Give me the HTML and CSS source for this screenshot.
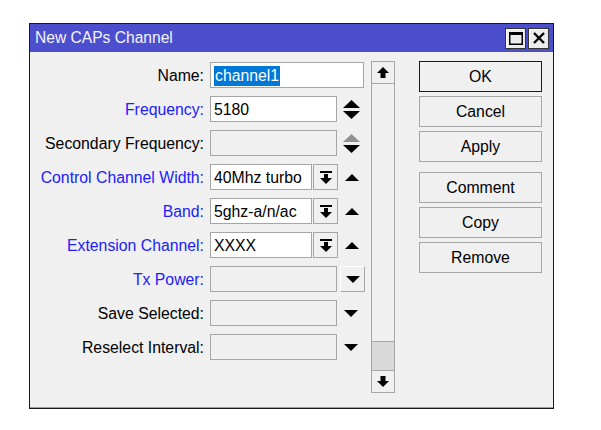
FILE: index.html
```html
<!DOCTYPE html>
<html>
<head>
<meta charset="utf-8">
<link rel="stylesheet" href="styles.css">
</head>
<body>
<div class="window">
  <div class="titlebar">
    <span class="title">New CAPs Channel</span>
    <div class="tbtns">
      <span class="tbtn"><svg width="14" height="13" viewBox="0 0 14 13"><rect x="0.75" y="0.75" width="12.5" height="11.5" fill="none" stroke="#000" stroke-width="1.5"/><rect x="0" y="0" width="14" height="3" fill="#000"/></svg></span>
      <span class="tbtn"><svg width="12" height="12" viewBox="0 0 12 12"><path d="M1 1 L11 11 M11 1 L1 11" stroke="#000" stroke-width="2.4"/></svg></span>
    </div>
  </div>
  <div class="body">
    <div class="form">
      <div class="row">
        <span class="lbl">Name:</span>
        <div class="input w154"><span class="sel">channel1</span></div>
      </div>
      <div class="row">
        <span class="lbl blue">Frequency:</span>
        <div class="input w127">5180</div>
        <span class="spin"><svg width="17" height="19" viewBox="0 0 17 19"><path d="M8.5 0 L17 8 L0 8 Z" fill="#000"/><path d="M0 11 L17 11 L8.5 19 Z" fill="#000"/></svg></span>
      </div>
      <div class="row">
        <span class="lbl">Secondary Frequency:</span>
        <div class="input w127 dis"></div>
        <span class="spin"><svg width="17" height="19" viewBox="0 0 17 19"><path d="M8.5 0 L17 8 L0 8 Z" fill="#8e938e"/><path d="M0 11 L17 11 L8.5 19 Z" fill="#000"/></svg></span>
      </div>
      <div class="row">
        <span class="lbl blue">Control Channel Width:</span>
        <div class="input w102">40Mhz turbo</div>
        <span class="ddbtn"><svg width="12" height="13" viewBox="0 0 12 13"><rect x="0" y="0" width="12" height="2" fill="#000"/><rect x="4" y="3" width="4" height="4" fill="#000"/><path d="M0 7 L12 7 L6 13 Z" fill="#000"/></svg></span>
        <span class="uptri"><svg width="14" height="7" viewBox="0 0 14 7"><path d="M7 0 L14 7 L0 7 Z" fill="#000"/></svg></span>
      </div>
      <div class="row">
        <span class="lbl blue">Band:</span>
        <div class="input w102">5ghz-a/n/ac</div>
        <span class="ddbtn"><svg width="12" height="13" viewBox="0 0 12 13"><rect x="0" y="0" width="12" height="2" fill="#000"/><rect x="4" y="3" width="4" height="4" fill="#000"/><path d="M0 7 L12 7 L6 13 Z" fill="#000"/></svg></span>
        <span class="uptri"><svg width="14" height="7" viewBox="0 0 14 7"><path d="M7 0 L14 7 L0 7 Z" fill="#000"/></svg></span>
      </div>
      <div class="row">
        <span class="lbl blue">Extension Channel:</span>
        <div class="input w102">XXXX</div>
        <span class="ddbtn"><svg width="12" height="13" viewBox="0 0 12 13"><rect x="0" y="0" width="12" height="2" fill="#000"/><rect x="4" y="3" width="4" height="4" fill="#000"/><path d="M0 7 L12 7 L6 13 Z" fill="#000"/></svg></span>
        <span class="uptri"><svg width="14" height="7" viewBox="0 0 14 7"><path d="M7 0 L14 7 L0 7 Z" fill="#000"/></svg></span>
      </div>
      <div class="row">
        <span class="lbl blue">Tx Power:</span>
        <div class="input w127 dis"></div>
        <span class="txbtn"><svg width="14" height="7" viewBox="0 0 14 7"><path d="M0 0 L14 0 L7 7 Z" fill="#000"/></svg></span>
      </div>
      <div class="row">
        <span class="lbl">Save Selected:</span>
        <div class="input w127 dis"></div>
        <span class="dntri"><svg width="14" height="7" viewBox="0 0 14 7"><path d="M0 0 L14 0 L7 7 Z" fill="#000"/></svg></span>
      </div>
      <div class="row">
        <span class="lbl">Reselect Interval:</span>
        <div class="input w127 dis"></div>
        <span class="dntri"><svg width="14" height="7" viewBox="0 0 14 7"><path d="M0 0 L14 0 L7 7 Z" fill="#000"/></svg></span>
      </div>
    </div>
    <div class="scroll">
      <span class="sbtn"><svg width="12" height="11" viewBox="0 0 12 11"><path d="M6 0 L12 6 L0 6 Z" fill="#000"/><rect x="3.5" y="6" width="5" height="5" fill="#000"/></svg></span>
      <div class="track"></div>
      <div class="thumb"></div>
      <span class="sbtn"><svg width="12" height="11" viewBox="0 0 12 11"><rect x="3.5" y="0" width="5" height="5" fill="#000"/><path d="M0 5 L12 5 L6 11 Z" fill="#000"/></svg></span>
    </div>
    <div class="buttons">
      <div class="btn ok">OK</div>
      <div class="btn">Cancel</div>
      <div class="btn">Apply</div>
      <div class="btn sep">Comment</div>
      <div class="btn">Copy</div>
      <div class="btn">Remove</div>
    </div>
  </div>
</div>
</body>
</html>
```
FILE: styles.css
```css
html, body {
  margin: 0;
  padding: 0;
  background: #ffffff;
}
body {
  font-family: "Liberation Sans", Arial, sans-serif;
  font-size: 15.8px;
  color: #000;
}
.window {
  margin: 23px 0 0 29px;
  width: 525px;
  height: 386px;
  box-sizing: border-box;
  border: 1px solid #1a1a1a;
  background: #f0f0f0;
  display: flex;
  flex-direction: column;
  box-shadow: inset 0 -1px 0 #a0a0a0;
}
.titlebar {
  height: 28px;
  background: #4c4fcd;
  display: flex;
  align-items: center;
  justify-content: space-between;
  padding: 0 4px 0 5px;
}
.title {
  color: #f4f4ff;
  font-size: 15.6px;
}
.tbtns {
  display: flex;
  gap: 2px;
}
.tbtn {
  width: 21px;
  height: 21px;
  box-sizing: border-box;
  border: 1px solid #333;
  background: #ececec;
  box-shadow: inset 1px 1px 0 #fff;
  display: flex;
  align-items: center;
  justify-content: center;
}
.body {
  display: flex;
  flex: 1;
}
.form {
  width: 341px;
  padding-top: 10px;
  display: flex;
  flex-direction: column;
  gap: 8px;
}
.row {
  display: flex;
  align-items: center;
  height: 26px;
}
.lbl {
  width: 174px;
  margin-right: 6px;
  padding-top: 1px;
  text-align: right;
  white-space: nowrap;
}
.blue {
  color: #2020fa;
}
.input {
  height: 26px;
  box-sizing: border-box;
  border: 1px solid #a6a6a6;
  background: #fff;
  padding-left: 3px;
  padding-top: 1px;
  display: flex;
  align-items: center;
  white-space: nowrap;
  overflow: hidden;
}
.input.dis {
  background: #f0f0f0;
}
.w154 { width: 154px; }
.w127 { width: 127px; }
.w102 { width: 102px; }
.sel {
  background: #0078d7;
  color: #fff;
  padding: 1px 1px;
  line-height: 18px;
}
.spin {
  margin-left: 6px;
  display: flex;
}
.ddbtn {
  width: 25px;
  height: 26px;
  box-sizing: border-box;
  margin-left: 1px;
  border: 1px solid #a6a6a6;
  background: #f0f0f0;
  display: flex;
  align-items: center;
  justify-content: center;
}
.uptri {
  margin-left: 7px;
  display: flex;
}
.txbtn {
  width: 25px;
  height: 26px;
  box-sizing: border-box;
  margin-left: 3px;
  border-top: 1px solid #fff;
  border-left: 1px solid #fff;
  border-right: 1px solid #a6a6a6;
  border-bottom: 1px solid #a6a6a6;
  display: flex;
  align-items: center;
  justify-content: center;
}
.dntri {
  margin-left: 7px;
  display: flex;
}
.scroll {
  margin-top: 9px;
  width: 24px;
  height: 332px;
  display: flex;
  flex-direction: column;
}
.sbtn {
  height: 23px;
  box-sizing: border-box;
  border: 1px solid #a6a6a6;
  background: #f0f0f0;
  display: flex;
  align-items: center;
  justify-content: center;
}
.track {
  flex: 1;
  border-left: 1px solid #a6a6a6;
  border-right: 1px solid #a6a6a6;
}
.thumb {
  height: 29px;
  box-sizing: border-box;
  border: 1px solid #a6a6a6;
  border-bottom: none;
  background: #d9d9d9;
}
.buttons {
  margin-left: 24px;
  padding-top: 9px;
  display: flex;
  flex-direction: column;
  gap: 4px;
}
.btn {
  width: 123px;
  height: 31px;
  box-sizing: border-box;
  border: 1px solid #a6a6a6;
  background: #f0f0f0;
  display: flex;
  align-items: center;
  justify-content: center;
  padding-top: 1px;
}
.btn.ok {
  border-color: #1a1a1a;
}
.btn.sep {
  margin-top: 6px;
}
```
